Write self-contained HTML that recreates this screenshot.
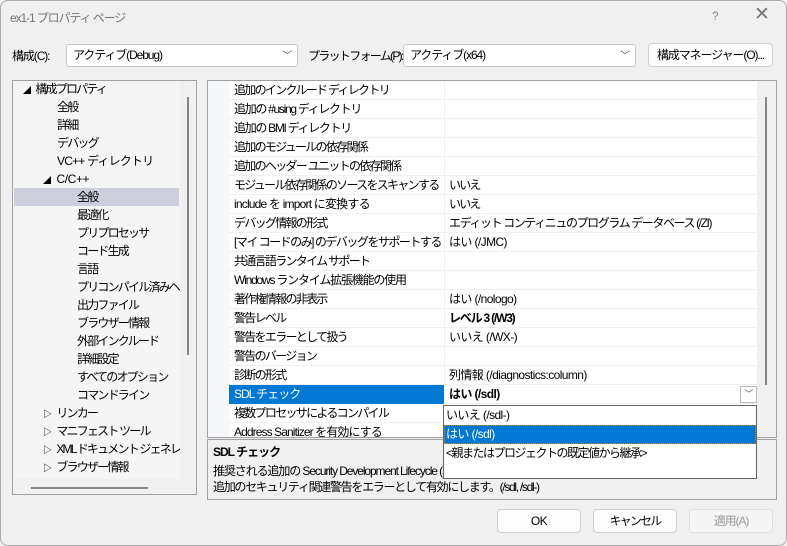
<!DOCTYPE html>
<html><head><meta charset="utf-8"><style>
*{box-sizing:border-box;margin:0;padding:0}
body{width:787px;height:546px;overflow:hidden;background:#f0f0f0;font-family:"Liberation Sans","Noto Sans CJK JP",sans-serif;font-size:12px;letter-spacing:-0.6px;color:#000;position:relative}
.j{letter-spacing:-1.8px}
.m{letter-spacing:-1.1px}
.a{position:absolute;white-space:nowrap}
.win{position:absolute;left:0;top:0;width:787px;height:546px;border:1px solid #aaa;border-radius:8px;background:#f0f0f0}
.combo{position:absolute;height:23px;background:#fff;border:1px solid #c8c8c8;border-radius:3px;padding:3px 6px;line-height:15px}
.chev{position:absolute;right:6px;top:4px;font-size:10px;color:#555}
.btn{position:absolute;height:24px;background:#fdfdfd;border:1px solid #d0d0d0;border-radius:4px;text-align:center;line-height:22px}
.tree{position:absolute;left:12px;top:80px;width:185px;height:415px;border:1px solid #a0a0a0;background:#f5f5f5;letter-spacing:-1.8px}
.ti{position:absolute;height:18px;line-height:18px;white-space:nowrap}
.grid{position:absolute;left:207px;top:80px;width:570px;height:358px;border:1px solid #a0a0a0;background:#fff;overflow:hidden}
.row{position:absolute;left:21px;width:528px;height:19px;border-bottom:1px solid #eef0f4;line-height:18px}
.row .n{position:absolute;left:5px;width:208px;overflow:hidden;white-space:nowrap;letter-spacing:-1.7px}
.row .v{position:absolute;left:220px;white-space:nowrap}
.row .sep{position:absolute;left:215px;top:0;height:19px;border-left:1px solid #eef0f4}
</style></head><body>
<div class="win"></div>
<div class="a m" style="left:10px;top:9px;color:#777;font-size:12px">ex1-1 プロパティ ページ</div>
<div class="a" style="left:712px;top:9px;color:#888">?</div>
<div class="a" style="left:754px;top:3px;color:#777;font-size:19px;font-weight:200">✕</div>

<div class="a m" style="left:12px;top:47px">構成(C):</div>
<div class="combo m" style="left:66px;top:44px;width:232px">アクティブ(Debug)<span class="chev">﹀</span></div>
<div class="a" style="left:308px;top:47px;letter-spacing:-1.7px">プラットフォーム(P):</div>
<div class="combo m" style="left:403px;top:44px;width:233px">アクティブ(x64)<span class="chev">﹀</span></div>
<div class="btn m" style="left:648px;top:43px;width:125px;height:24px">構成マネージャー(O)...</div>

<div class="tree">
<div style="position:absolute;left:167px;top:0;width:16px;height:398px;background:#f0f0f0"></div>
<div style="position:absolute;left:174px;top:16px;width:2px;height:258px;background:#858585"></div>
<div style="position:absolute;left:0;top:398px;width:183px;height:15px;background:#f0f0f0"></div>
<div style="position:absolute;left:18px;top:406px;width:117px;height:2px;background:#858585"></div>
<div class="ti" style="left:10px;top:-1px"><span style="font-size:8px">◢</span>&nbsp;&nbsp;&nbsp; 構成プロパティ</div>
<div class="ti" style="left:44px;top:17px">全般</div>
<div class="ti" style="left:44px;top:35px">詳細</div>
<div class="ti" style="left:44px;top:53px">デバッグ</div>
<div class="ti" style="left:44px;top:71px;letter-spacing:-0.8px">VC++ ディレクトリ</div>
<div class="ti" style="left:30px;top:89px;letter-spacing:-0.4px"><span style="font-size:8px">◢</span>&nbsp; C/C++</div>
<div class="ti" style="left:1px;top:107px;width:165px;background:#cccedb"></div>
<div class="ti" style="left:64px;top:107px">全般</div>
<div class="ti" style="left:64px;top:125px">最適化</div>
<div class="ti" style="left:64px;top:143px">プリプロセッサ</div>
<div class="ti" style="left:64px;top:161px">コード生成</div>
<div class="ti" style="left:64px;top:179px">言語</div>
<div class="ti" style="left:64px;top:197px;width:103px;overflow:hidden">プリコンパイル済みヘッダー</div>
<div class="ti" style="left:64px;top:215px">出力ファイル</div>
<div class="ti" style="left:64px;top:233px">ブラウザー情報</div>
<div class="ti" style="left:64px;top:251px">外部インクルード</div>
<div class="ti" style="left:64px;top:269px">詳細設定</div>
<div class="ti" style="left:64px;top:287px">すべてのオプション</div>
<div class="ti" style="left:64px;top:305px">コマンドライン</div>
<div class="ti" style="left:30px;top:323px"><span style="font-size:9px">▷</span>&nbsp;&nbsp;&nbsp; リンカー</div>
<div class="ti" style="left:30px;top:341px"><span style="font-size:9px">▷</span>&nbsp;&nbsp;&nbsp; マニフェスト ツール</div>
<div class="ti" style="left:30px;top:359px;width:137px;overflow:hidden"><span style="font-size:9px">▷</span>&nbsp;&nbsp;&nbsp; XML ドキュメント ジェネレーター</div>
<div class="ti" style="left:30px;top:377px"><span style="font-size:9px">▷</span>&nbsp;&nbsp;&nbsp; ブラウザー情報</div>
</div>

<div class="grid">
<div style="position:absolute;left:0;top:0;width:21px;height:358px;background:#f5f7fa"></div>
<div style="position:absolute;left:549px;top:0;width:19px;height:358px;background:#f0f0f0"></div>
<div style="position:absolute;left:557px;top:16px;width:2px;height:288px;background:#858585"></div>
<div class="row" style="top:0"><span class="n">追加のインクルード ディレクトリ</span><span class="sep"></span></div>
<div class="row" style="top:19px"><span class="n" style="letter-spacing:-1.3px">追加の #using ディレクトリ</span><span class="sep"></span></div>
<div class="row" style="top:38px"><span class="n" style="letter-spacing:-1.3px">追加の BMI ディレクトリ</span><span class="sep"></span></div>
<div class="row" style="top:57px"><span class="n">追加のモジュールの依存関係</span><span class="sep"></span></div>
<div class="row" style="top:76px"><span class="n">追加のヘッダー ユニットの依存関係</span><span class="sep"></span></div>
<div class="row" style="top:95px"><span class="n">モジュール依存関係のソースをスキャンする</span><span class="sep"></span><span class="v j">いいえ</span></div>
<div class="row" style="top:114px"><span class="n" style="letter-spacing:-0.8px">include を import に変換する</span><span class="sep"></span><span class="v j">いいえ</span></div>
<div class="row" style="top:133px"><span class="n">デバッグ情報の形式</span><span class="sep"></span><span class="v" style="letter-spacing:-1.4px">エディット コンティニュのプログラム データベース (/ZI)</span></div>
<div class="row" style="top:152px"><span class="n" style="letter-spacing:-1.5px">[マイ コードのみ] のデバッグをサポートする</span><span class="sep"></span><span class="v">はい (/JMC)</span></div>
<div class="row" style="top:171px"><span class="n">共通言語ランタイム サポート</span><span class="sep"></span></div>
<div class="row" style="top:190px"><span class="n" style="letter-spacing:-1.2px">Windows ランタイム拡張機能の使用</span><span class="sep"></span></div>
<div class="row" style="top:209px"><span class="n">著作権情報の非表示</span><span class="sep"></span><span class="v">はい (/nologo)</span></div>
<div class="row" style="top:228px"><span class="n">警告レベル</span><span class="sep"></span><span class="v" style="font-weight:bold;letter-spacing:-1.2px">レベル 3 (/W3)</span></div>
<div class="row" style="top:247px"><span class="n">警告をエラーとして扱う</span><span class="sep"></span><span class="v">いいえ (/WX-)</span></div>
<div class="row" style="top:266px"><span class="n">警告のバージョン</span><span class="sep"></span></div>
<div class="row" style="top:285px"><span class="n">診断の形式</span><span class="sep"></span><span class="v">列情報 (/diagnostics:column)</span></div>
<div class="row" style="top:304px"><span style="position:absolute;left:0;top:0;width:215px;height:19px;background:#0078d4"></span><span class="n" style="color:#fff;letter-spacing:-1px">SDL チェック</span><span class="v" style="font-weight:bold">はい (/sdl)</span>
<span style="position:absolute;left:511px;top:1px;width:17px;height:17px;border:1px solid #bbb;background:#fff;font-size:9px;text-align:center;line-height:15px;color:#555">﹀</span></div>
<div class="row" style="top:323px"><span class="n">複数プロセッサによるコンパイル</span><span class="sep"></span></div>
<div class="row" style="top:342px"><span class="n" style="letter-spacing:-0.9px">Address Sanitizer を有効にする</span><span class="sep"></span></div>
</div>

<div style="position:absolute;left:207px;top:439px;width:570px;height:61px;border:1px solid #a0a0a0;background:#f0f0f0"></div>
<div class="a" style="left:213px;top:443px;font-weight:bold;letter-spacing:-1px">SDL チェック</div>
<div class="a" style="left:213px;top:462px;width:543px;overflow:hidden;letter-spacing:-1.1px">推奨される追加の Security Development Lifecycle (SDL) チェックです。追加の安全なコード生成機能を有効にし、</div>
<div class="a" style="left:213px;top:478px;letter-spacing:-1.3px">追加のセキュリティ関連警告をエラーとして有効にします。(/sdl, /sdl-)</div>

<div style="position:absolute;left:443px;top:405px;width:314px;height:74px;border:1px solid #666;background:#fff"></div>
<div class="a" style="left:446px;top:406px;line-height:18px">いいえ (/sdl-)</div>
<div style="position:absolute;left:444px;top:425px;width:312px;height:19px;background:#0078d4;outline:1px dotted #d88a00;outline-offset:-1px"></div>
<div class="a" style="left:446px;top:425px;line-height:19px;color:#fff">はい (/sdl)</div>
<div class="a" style="left:446px;top:444px;line-height:18px;letter-spacing:-1.5px">&lt;親またはプロジェクトの既定値から継承&gt;</div>

<div class="btn" style="left:497px;top:509px;width:84px">OK</div>
<div class="btn j" style="left:593px;top:509px;width:84px">キャンセル</div>
<div class="btn m" style="left:689px;top:509px;width:84px;color:#999;background:#f5f5f5;border-color:#e0e0e0">適用(A)</div>
</body></html>
